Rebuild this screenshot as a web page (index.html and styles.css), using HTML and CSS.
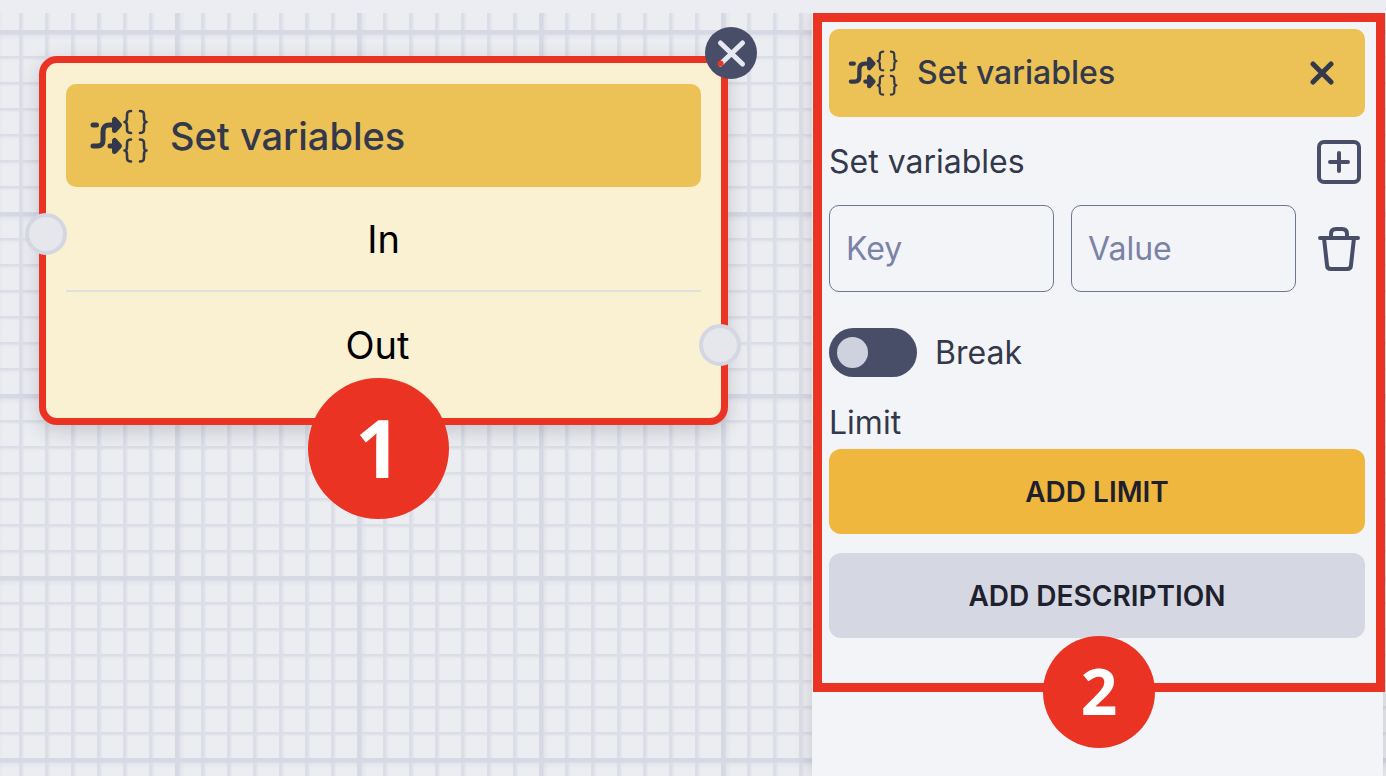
FILE: index.html
```html
<!DOCTYPE html>
<html lang="en">
<head>
    <meta charset="UTF-8">
    <meta name="viewport" content="width=device-width, initial-scale=1.0">
    <title>Set variables</title>
    <link rel="stylesheet" href="styles.css">
</head>
<body>

<!-- Icon shared by the node and the panel -->
<svg class="sprite" aria-hidden="true">
    <symbol id="icon-set-variables" viewBox="0 0 58 54">
        <g fill="none" stroke="currentColor" stroke-linecap="round" stroke-linejoin="round">
            <path stroke-width="5" d="M3 16h3.500M3 37h4.500c4 0 5.500-2 5.500-6v-8c0-5 2-7 6.500-7h6M20 37h6"/>
            <path stroke-width="2.600" d="M41 2c-4 0-4 2-4 5v2c0 3-1 4-2.500 4 1.500 0 2.500 1 2.500 4v2c0 3 0 5 4 5M50 2c4 0 4 2 4 5v2c0 3 1 4 2.500 4-1.500 0-2.500 1-2.500 4v2c0 3 0 5-4 5M41 30.500c-4 0-4 2-4 5v2c0 3-1 4-2.500 4 1.500 0 2.500 1 2.500 4v2c0 3 0 5 4 5M50 30.500c4 0 4 2 4 5v2c0 3 1 4 2.500 4-1.500 0-2.500 1-2.500 4v2c0 3 0 5-4 5"/>
            <path fill="currentColor" stroke-width="5" d="M24.500 10.500v11l5-5.500zM24.500 31.500v11l5-5.500z"/>
        </g>
    </symbol>
</svg>

<main class="workspace">

    <!-- Canvas with the node -->
    <section class="canvas">
        <article class="node">
            <header class="node-header">
                <svg class="node-icon"><use href="#icon-set-variables"/></svg>
                <span>Set variables</span>
            </header>
            <div class="node-row">In</div>
            <div class="node-row node-row-out">Out</div>
            <span class="port port-in"></span>
            <span class="port port-out"></span>
            <button class="node-close" type="button" aria-label="Remove node">
                <svg viewBox="0 0 52 52">
                    <path d="M15.500 16l22 21M37.500 16l-22 21" fill="none" stroke="#e8e9f0" stroke-width="5" stroke-linecap="round"/>
                    <circle cx="15.500" cy="36.500" r="3" fill="#eb3323"/>
                </svg>
            </button>
            <span class="badge badge-large">1</span>
        </article>
    </section>

    <!-- Settings panel -->
    <aside class="panel">
        <form class="settings">
            <header class="panel-header">
                <svg class="panel-icon"><use href="#icon-set-variables"/></svg>
                <span>Set variables</span>
                <button class="icon-button panel-close" type="button" aria-label="Close">
                    <svg viewBox="0 0 24 24" width="24" height="24"><path d="M3 3l18 18M21 3L3 21" stroke-width="5"/></svg>
                </button>
            </header>

            <div class="title-row">
                <span>Set variables</span>
                <button class="icon-button" type="button" aria-label="Add variable">
                    <svg viewBox="0 0 44 44" width="44" height="44">
                        <rect x="2" y="2" width="40" height="40" rx="5" stroke-width="4"/>
                        <path d="M22 13v18M13 22h18" stroke-width="4"/>
                    </svg>
                </button>
            </div>

            <div class="variable-row">
                <input type="text" placeholder="Key" aria-label="Key">
                <input type="text" placeholder="Value" aria-label="Value">
                <button class="icon-button" type="button" aria-label="Delete variable">
                    <svg viewBox="0 0 44 44" width="44" height="44">
                        <path d="M3 11h38M14 11V7q0-5 5-5h6q5 0 5 5v4M7 11l3 27q0 4 4 4h16q4 0 4-4l3-27" stroke-width="4"/>
                    </svg>
                </button>
            </div>

            <div class="toggle-row">
                <input class="toggle" type="checkbox" id="break">
                <label for="break">Break</label>
            </div>

            <div class="limit-title">Limit</div>
            <button class="button button-primary" type="button">ADD LIMIT</button>
            <button class="button button-secondary" type="button">ADD DESCRIPTION</button>
            <span class="badge">2</span>
        </form>
    </aside>

</main>

</body>
</html>
```
FILE: styles.css
```css
* { box-sizing: border-box; }
body { margin: 0; background-color: #ecedf2; color: #33384a; font-family: "Inter", sans-serif; font-size: 32px; line-height: 36px; }
button, input { font-family: inherit; }
button { padding: 0; border: none; background: none; cursor: pointer; }
.sprite { position: absolute; width: 0; height: 0; }

.workspace {
    display: flex;
    min-height: calc(100vh - 13px);
    margin-top: 13px;
    overflow: hidden;
    background-color: #ecedf1;
    background-image:
        linear-gradient(90deg, #d6d9e4 4px, rgba(213, 216, 227, 0.4) 5px, transparent 10px),
        linear-gradient(#d6d9e4 4px, rgba(213, 216, 227, 0.4) 5px, transparent 10px),
        linear-gradient(90deg, #dcdee7 3px, rgba(217, 219, 229, 0.3) 4px, transparent 6px),
        linear-gradient(#dcdee7 2px, rgba(217, 219, 229, 0.3) 3px, transparent 5px);
    background-size: 182px 182px, 182px 182px, 26px 26px, 26px 26px;
    background-position: 175px 0, 0 17px, 19px 0, 0 17px;
}

/* Node */
.canvas { position: relative; flex: 1; }
.node { position: absolute; top: 43px; left: 39px; width: 689px; padding: 21px 20px; border: 7px solid #eb3323; border-radius: 18px; background-color: #faf0d2; box-shadow: 0 6px 20px rgba(40, 45, 60, 0.2); color: #000; font-size: 38px; }
.node-header { display: flex; align-items: center; gap: 22px; height: 103px; padding-left: 24px; border-radius: 10px; background-color: #ecc257; color: #33384a; font-weight: 500; }
.node-icon { width: 58px; height: 54px; }
.node-row { display: flex; align-items: center; justify-content: center; height: 105px; border-bottom: 2px solid #e0e0df; }
.node-row-out { padding-right: 12px; border-bottom: none; }
.port { position: absolute; width: 42px; height: 42px; border: 4px solid #d4d7e2; border-radius: 50%; background-color: #e6e7ed; }
.port-in { top: 150px; left: -21px; }
.port-out { top: 261px; right: -20px; }
.node-close { position: absolute; top: -36px; right: -36px; width: 52px; height: 52px; border-radius: 50%; background-color: #484e68; }
.node-close svg { display: block; }

.badge { position: absolute; bottom: -65px; left: 50%; display: flex; align-items: center; justify-content: center; width: 112px; height: 112px; margin-left: -56px; padding-bottom: 3px; border-radius: 50%; background-color: #eb3323; color: #fff; font-family: "Open Sans", sans-serif; font-size: 64px; font-weight: 700; line-height: 64px; }
.badge-large { bottom: -101px; width: 141px; height: 141px; margin-left: -76px; font-size: 80px; line-height: 80px; }

/* Panel */
.panel { width: 571px; margin-right: 3px; background-color: #f3f4f8; box-shadow: 0 0 16px rgba(40, 45, 60, 0.2); }
.settings { position: relative; margin: 0 -2px 0 1px; padding: 7px 11px 45px 7px; border: 9px solid #eb3323; }
.panel-header { display: flex; align-items: center; height: 88px; padding: 0 31px 0 19px; border-radius: 10px; background-color: #ecc257; font-weight: 500; }
.panel-icon { width: 50px; height: 46px; margin-right: 19px; }
.icon-button { display: flex; flex: none; color: #484e68; }
.icon-button svg { fill: none; stroke: currentColor; stroke-linecap: round; stroke-linejoin: round; }
.panel-close { margin-left: auto; color: #33384a; }
.title-row { display: flex; align-items: center; justify-content: space-between; margin: 23px 4px 21px 0; }
.variable-row { display: flex; align-items: center; gap: 17px; margin-right: 4px; }
.variable-row input { flex: 1; min-width: 0; height: 87px; padding: 0 16px; border: 1px solid #6d7596; border-radius: 10px; background: none; color: #33384a; font-size: 32px; }
.variable-row input::placeholder { color: #7a82a6; opacity: 1; }
.variable-row .icon-button { margin-left: 4px; }
.toggle-row { display: flex; align-items: center; gap: 18px; margin: 36px 0 28px; }
.toggle { display: flex; align-items: center; width: 88px; height: 49px; margin: 0; padding-left: 8px; border-radius: 25px; background-color: #484e68; appearance: none; cursor: pointer; }
.toggle::before { content: ""; width: 31px; height: 31px; border-radius: 50%; background-color: #cfd1de; }
.toggle:checked { justify-content: flex-end; padding: 0 8px 0 0; }
.limit-title { margin-bottom: 8px; }
.button { display: block; width: 100%; height: 85px; border-radius: 12px; color: #1e212d; font-size: 28px; font-weight: 600; }
.button-primary { margin-bottom: 19px; background-color: #f0b73f; }
.button-secondary { background-color: #d5d8e2; }
```
